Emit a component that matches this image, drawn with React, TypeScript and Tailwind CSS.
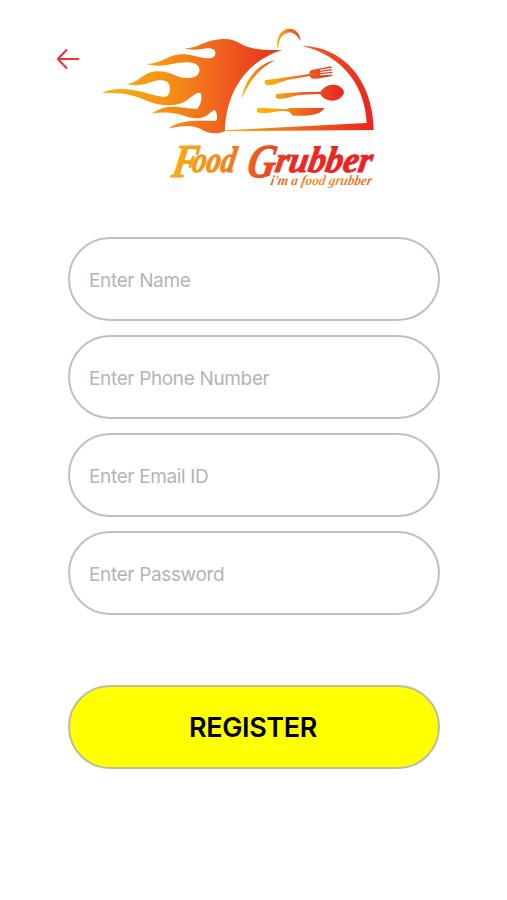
import { useState } from "react";

const fields = [
    { name: "name", type: "text", label: "Enter Name" },
    { name: "phone", type: "tel", label: "Enter Phone Number" },
    { name: "email", type: "email", label: "Enter Email ID" },
    { name: "password", type: "password", label: "Enter Password" },
];

function BackArrow() {
    return (
        <svg width="24" height="22" viewBox="0 0 24 22" fill="none" stroke="#f0303a" strokeWidth="2" strokeLinecap="round" strokeLinejoin="round">
            <path d="M22.5 11H2M10.5 2 1.8 11l8.7 9" />
        </svg>
    );
}

function Logo() {
    return (
        <svg className="block" width="300" height="175" viewBox="0 0 900 525">
            <defs>
                <linearGradient id="flame" gradientUnits="userSpaceOnUse" x1="35" y1="0" x2="520" y2="0">
                    <stop offset="0" stopColor="#f3b60c" />
                    <stop offset="0.4" stopColor="#f59216" />
                    <stop offset="0.7" stopColor="#f0661d" />
                    <stop offset="1" stopColor="#e93c1f" />
                </linearGradient>
                <linearGradient id="dome" gradientUnits="userSpaceOnUse" x1="400" y1="0" x2="850" y2="0">
                    <stop offset="0" stopColor="#f7b50e" />
                    <stop offset="0.5" stopColor="#f0651f" />
                    <stop offset="1" stopColor="#ea2420" />
                </linearGradient>
                <linearGradient id="knob" gradientUnits="userSpaceOnUse" x1="560" y1="0" x2="635" y2="0">
                    <stop offset="0" stopColor="#f7b50e" />
                    <stop offset="1" stopColor="#ea3a20" />
                </linearGradient>
                <linearGradient id="shine" gradientUnits="userSpaceOnUse" x1="455" y1="0" x2="555" y2="0">
                    <stop offset="0" stopColor="#f7b50e" />
                    <stop offset="1" stopColor="#ea4a20" />
                </linearGradient>
                <linearGradient id="tools" gradientUnits="userSpaceOnUse" x1="510" y1="0" x2="750" y2="0">
                    <stop offset="0" stopColor="#f9b40d" />
                    <stop offset="0.2" stopColor="#f7a514" />
                    <stop offset="0.6" stopColor="#ed5b20" />
                    <stop offset="1" stopColor="#ea2a20" />
                </linearGradient>
                <linearGradient id="title" gradientUnits="userSpaceOnUse" x1="235" y1="0" x2="850" y2="0">
                    <stop offset="0" stopColor="#f6ae10" />
                    <stop offset="0.25" stopColor="#f08a1a" />
                    <stop offset="0.42" stopColor="#ec5a20" />
                    <stop offset="0.6" stopColor="#e82a22" />
                    <stop offset="1" stopColor="#e8231f" />
                </linearGradient>
                <linearGradient id="tagline" gradientUnits="userSpaceOnUse" x1="540" y1="0" x2="845" y2="0">
                    <stop offset="0" stopColor="#e8662a" />
                    <stop offset="0.5" stopColor="#e8952c" />
                    <stop offset="1" stopColor="#e2702a" />
                </linearGradient>
            </defs>

            {/* flames */}
            <path
                fill="url(#flame)"
                d="M276 85C325 88 336 60 400 57C440 56 452 77 486 84C515 92 545 89 576 91C480 118 408 205 405 333C385 343 355 343 333 328C303 312 275 319 235 325C262 306 295 302 330 302C348 303 365 302 379 302C384 292 380 276 374 270C360 275 352 292 325 295C285 297 265 268 183 281C210 266 222 260 245 260C278 260 298 267 322 266C334 253 337 232 333 221C325 212 305 230 288 243C255 263 210 258 170 242C130 225 100 215 35 220C60 206 90 205 125 209C165 216 185 225 222 231C238 230 241 213 239 198C236 183 222 180 208 181C180 183 165 202 108 193C150 188 155 158 200 154C245 153 255 175 295 174C325 174 333 155 326 140C312 120 270 128 245 132C220 138 200 139 168 132C225 130 232 100 285 103C320 107 330 116 360 115C378 113 381 95 369 87C350 80 335 90 308 89Z"
            />

            {/* cloche */}
            <path fill="url(#knob)" d="M562 83C558 45 577 26 600 26C619 27 630 42 632 64C620 43 608 36 594 38C575 42 567 58 565 82Z" />
            <path fill="url(#dome)" d="M635 77C755 78 850 178 851 330L405 334L404 331L830 309C826 205 765 108 635 77Z" />
            <path fill="url(#shine)" d="M455 236C463 180 504 130 555 121C508 144 480 181 455 236Z" />

            {/* fork */}
            <path
                fill="url(#tools)"
                d="M527 180C550 177 580 173 600 170L658 162C658 153 661 150 668 149L724 139L725 143L690 149V152L726 147V151L690 156V159L727 155V159L690 163V166L727 164V168L681 176C669 178 662 175 659 168L604 178C580 181 562 194 538 196C522 197 521 182 527 180Z"
            />
            {/* spoon */}
            <path
                fill="url(#tools)"
                d="M562 221L640 216L692 215C702 198 720 193 735 194C753 197 763 210 762 219C756 234 742 242 726 242C710 241 697 235 691 222L640 224C612 225 592 236 567 237C555 237 554 222 562 221Z"
            />
            {/* knife */}
            <path fill="url(#tools)" d="M508 263L590 268L600 264L703 264C696 281 663 290 612 287C604 287 603 278 597 275L583 273C555 273 540 281 512 279C498 279 497 263 508 263Z" />

            <g fontFamily="'Liberation Serif', serif" fontStyle="italic" fontWeight="700">
                <g transform="translate(0 456) skewX(-10)" fill="url(#title)" stroke="url(#title)" strokeWidth="3">
                    <text x="244" y="14" fontSize="142" textLength="76" lengthAdjust="spacingAndGlyphs">F</text>
                    <text x="302" y="0" fontSize="110" textLength="130" lengthAdjust="spacingAndGlyphs">ood</text>
                    <text x="470" y="14" fontSize="142" textLength="84" lengthAdjust="spacingAndGlyphs">G</text>
                    <text x="552" y="0" fontSize="110" textLength="290" lengthAdjust="spacingAndGlyphs">rubber</text>
                </g>
                <g transform="translate(0 495) skewX(-10)">
                    <text x="540" y="0" fontSize="42" fill="url(#tagline)" textLength="304" lengthAdjust="spacingAndGlyphs">i'm a food grubber</text>
                </g>
            </g>
        </svg>
    );
}

export default function App() {
    const [values, setValues] = useState<Record<string, string>>({});

    return (
        <main className="min-h-[900px] w-[507px] bg-white pt-5 font-['Inter',sans-serif]">
            <header className="flex items-start pl-14">
                <button type="button" aria-label="Back" className="mt-7 w-[34px]">
                    <BackArrow />
                </button>
                <Logo />
            </header>

            <form className="mt-[42px] ml-[68px] flex w-[372px] flex-col" onSubmit={(e) => e.preventDefault()}>
                <div className="flex flex-col gap-3.5">
                    {fields.map((f) => (
                        <input
                            key={f.name}
                            type={f.type}
                            value={values[f.name] ?? ""}
                            onChange={(e) => setValues({ ...values, [f.name]: e.target.value })}
                            placeholder={f.label}
                            className="h-[84px] w-full rounded-full border-2 border-[#c0c0c0] px-[19px] pt-0.5 text-[19px] tracking-[-0.35px] outline-none placeholder:text-[#b4b4b4]"
                        />
                    ))}
                </div>
                <button
                    type="submit"
                    className="mt-[70px] h-[84px] rounded-full border-2 border-[#bdbda0] bg-[#ffff00] pt-0.5 pr-0.5 text-[27px] font-semibold tracking-[-0.4px] text-black"
                >
                    REGISTER
                </button>
            </form>
        </main>
    );
}
